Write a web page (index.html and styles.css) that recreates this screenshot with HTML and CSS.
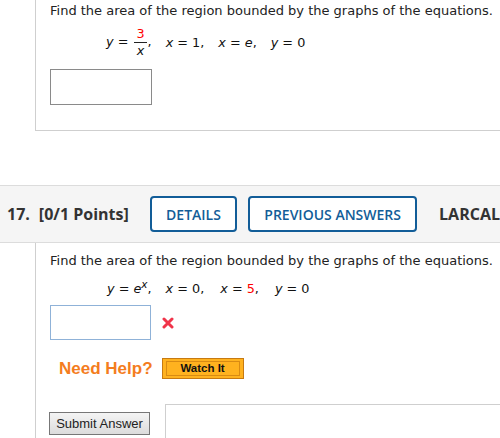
FILE: index.html
```html
<!DOCTYPE html>
<html>
<head>
<meta charset="utf-8">
<link rel="stylesheet" href="styles.css">
</head>
<body>
<div class="q prev">
  <p class="prompt">Find the area of the region bounded by the graphs of the equations.</p>
  <div class="eq eq1">
    <span class="term"><i>y</i> = <span class="frac"><span class="num red">3</span><span class="den"><i>x</i></span></span>,</span>
    <span class="term"><i>x</i> = 1,</span>
    <span class="term"><i>x</i> = <i>e</i>,</span>
    <span class="term"><i>y</i> = 0</span>
  </div>
  <div class="answer-row"><span class="box"></span></div>
</div>

<div class="qhead">
  <span class="qnum">17.</span>
  <span class="pts">[0/1 Points]</span>
  <button class="hbtn details">DETAILS</button>
  <button class="hbtn prevans">PREVIOUS ANSWERS</button>
  <span class="src">LARCAL</span>
</div>

<div class="q cur">
  <p class="prompt">Find the area of the region bounded by the graphs of the equations.</p>
  <div class="eq eq2">
    <span class="term first"><i>y</i> = <i>e</i><sup><i>x</i></sup>,</span>
    <span class="term"><i>x</i> = 0,</span>
    <span class="term"><i>x</i> = <span class="red">5</span>,</span>
    <span class="term"><i>y</i> = 0</span>
  </div>
  <div class="answer-row">
    <span class="box blue"></span>
    <svg class="xmark" width="12" height="12" viewBox="0 0 12 12"><path d="M2 2 L10 10 M10 2 L2 10" stroke="#f0344a" stroke-width="3" stroke-linecap="round"/></svg>
  </div>
  <div class="help">
    <span class="need">Need Help?</span>
    <span class="watch"><span class="watch-in">Watch It</span></span>
  </div>
  <div class="submit-row">
    <button class="submit">Submit Answer</button>
    <div class="panel"></div>
  </div>
</div>
</body>
</html>
```
FILE: styles.css
```css
* { box-sizing: border-box; }
html, body { margin: 0; padding: 0; background: #fff; overflow: hidden; }
body { width: 500px; height: 438px; font-family: "DejaVu Sans", Verdana, sans-serif; color: #222; }

.q { margin-left: 35px; border-left: 1px solid #cfcfcf; padding-left: 14px; }
.prev { height: 131px; border-bottom: 1px solid #cfcfcf; padding-top: 3px; }

.prompt { margin: 0; font-size: 13px; line-height: 16px; white-space: nowrap; color: #222; }

.eq { font-size: 12.8px; white-space: nowrap; display: flex; color: #111; }
.eq i { font-style: italic; }
.eq1 { margin: 8px 0 0 56px; height: 30px; align-items: center; }
.eq1 .term { margin-right: 14px; }
.frac { display: inline-flex; flex-direction: column; align-items: center; vertical-align: middle; line-height: 14px; margin: 0 1px 0 2px; }
.frac .num { border-bottom: 1px solid #222; padding: 0 2px 1px; }
.frac .den { padding-top: 1px; }
.red { color: #f00; }
.eq2 sup { font-size: 10.5px; vertical-align: 5px; line-height: 0; }

.answer-row { display: flex; align-items: center; }
.prev .answer-row { margin-top: 12px; }
.box { width: 102px; height: 36px; border: 1px solid #8a8a8a; display: block; }

.qhead { margin-top: 54px; height: 58px; border-top: 1px solid #dcdcdc; border-bottom: 1px solid #dcdcdc; background: #f5f5f5; display: flex; align-items: center; padding-left: 7px; font-family: "Open Sans", sans-serif; white-space: nowrap; overflow: hidden; }
.qnum, .pts, .src { font-weight: 700; font-size: 16px; color: #333; }
.pts { margin-left: 9px; }
.hbtn { font-family: "Open Sans", sans-serif; font-weight: 600; font-size: 14px; color: #125d98; background: #fff; border: 2px solid #125d98; border-radius: 4px; height: 36px; padding: 0; margin-left: 11px; }
.details { margin-left: 21px; width: 88px; }
.prevans { width: 170px; }
.src { margin-left: 22px; }

.cur { padding-top: 10px; }
.eq2 { margin: 10px 0 0 57px; height: 18px; align-items: center; }
.eq2 .term { margin-right: 16px; }
.eq2 .term.first { margin-right: 14px; }
.cur .answer-row { margin-top: 8px; }
.box.blue { border-color: #8fb2d8; height: 35px; width: 101px; }
.xmark { margin-left: 11px; margin-top: 1px; }

.help { display: flex; align-items: center; margin-top: 18px; padding-left: 9px; }
.need { font-family: "Liberation Sans", Arial, sans-serif; font-weight: 700; font-size: 17px; color: #f47d1e; }
.watch { margin-left: 9px; border: 1px solid #c77a11; background: #ffb21f; padding: 2px 3px; display: inline-block; }
.watch-in { display: block; width: 74px; height: 15px; border: 1px solid #d98b13; font-family: "Liberation Sans", Arial, sans-serif; font-weight: 700; font-size: 11.5px; line-height: 13px; text-align: center; color: #111; }

.submit-row { display: flex; margin-top: 25px; }
.submit { margin-top: 8px; height: 23px; width: 101px; margin-left: -1px; font-family: "Liberation Sans", Arial, sans-serif; font-size: 13px; color: #222; border: 1px solid #777; background: linear-gradient(#f4f4f4, #dcdcdc); padding: 0; }
.panel { margin-left: 15px; flex: 1; height: 60px; border-left: 1px solid #cfcfcf; border-top: 1px solid #cfcfcf; }
```
